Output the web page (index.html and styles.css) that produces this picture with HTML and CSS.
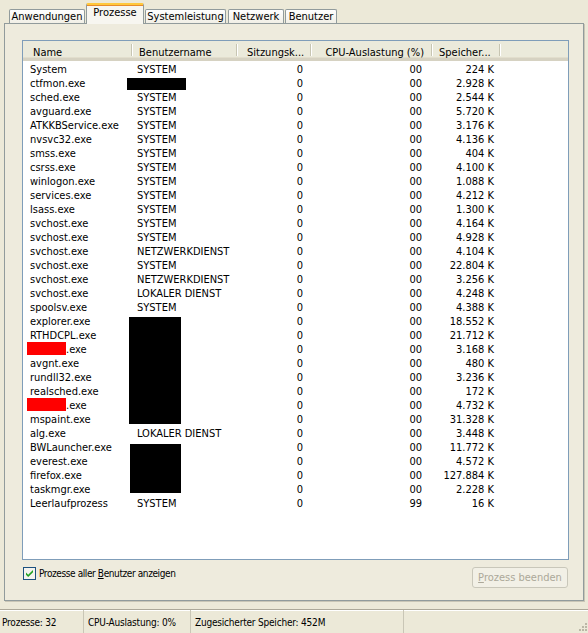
FILE: index.html
```html
<!DOCTYPE html>
<html lang="de">
<head>
<meta charset="utf-8">
<title>Task-Manager</title>
<link rel="stylesheet" href="styles.css">
</head>
<body>
<div class="window">
  <div class="content">
    <div class="tabs">
      <div class="tab tab-anw">Anwendungen</div>
      <div class="tab tab-active tab-proz">Prozesse</div>
      <div class="tab tab-sys">Systemleistung</div>
      <div class="tab tab-net">Netzwerk</div>
      <div class="tab tab-ben">Benutzer</div>
    </div>
    <div class="panel">
      <div class="list">
        <div class="header">
          <div class="hcell h-name">Name</div>
          <div class="hcell h-user">Benutzername</div>
          <div class="hcell h-sess">Sitzungsk...</div>
          <div class="hcell h-cpu">CPU-Auslastung (%)</div>
          <div class="hcell h-mem">Speicher...</div>
          <div class="hfill"></div>
        </div>
        <table class="rows">
          <colgroup><col class="c-name"><col class="c-user"><col class="c-sess"><col class="c-cpu"><col class="c-mem"></colgroup>
          <tbody>
            <tr><td class="n">System</td><td class="u">SYSTEM</td><td class="s">0</td><td class="p">00</td><td class="m">224 K</td></tr>
            <tr><td class="n">ctfmon.exe</td><td class="u"></td><td class="s">0</td><td class="p">00</td><td class="m">2.928 K</td></tr>
            <tr><td class="n">sched.exe</td><td class="u">SYSTEM</td><td class="s">0</td><td class="p">00</td><td class="m">2.544 K</td></tr>
            <tr><td class="n">avguard.exe</td><td class="u">SYSTEM</td><td class="s">0</td><td class="p">00</td><td class="m">5.720 K</td></tr>
            <tr><td class="n">ATKKBService.exe</td><td class="u">SYSTEM</td><td class="s">0</td><td class="p">00</td><td class="m">3.176 K</td></tr>
            <tr><td class="n">nvsvc32.exe</td><td class="u">SYSTEM</td><td class="s">0</td><td class="p">00</td><td class="m">4.136 K</td></tr>
            <tr><td class="n">smss.exe</td><td class="u">SYSTEM</td><td class="s">0</td><td class="p">00</td><td class="m">404 K</td></tr>
            <tr><td class="n">csrss.exe</td><td class="u">SYSTEM</td><td class="s">0</td><td class="p">00</td><td class="m">4.100 K</td></tr>
            <tr><td class="n">winlogon.exe</td><td class="u">SYSTEM</td><td class="s">0</td><td class="p">00</td><td class="m">1.088 K</td></tr>
            <tr><td class="n">services.exe</td><td class="u">SYSTEM</td><td class="s">0</td><td class="p">00</td><td class="m">4.212 K</td></tr>
            <tr><td class="n">lsass.exe</td><td class="u">SYSTEM</td><td class="s">0</td><td class="p">00</td><td class="m">1.300 K</td></tr>
            <tr><td class="n">svchost.exe</td><td class="u">SYSTEM</td><td class="s">0</td><td class="p">00</td><td class="m">4.164 K</td></tr>
            <tr><td class="n">svchost.exe</td><td class="u">SYSTEM</td><td class="s">0</td><td class="p">00</td><td class="m">4.928 K</td></tr>
            <tr><td class="n">svchost.exe</td><td class="u">NETZWERKDIENST</td><td class="s">0</td><td class="p">00</td><td class="m">4.104 K</td></tr>
            <tr><td class="n">svchost.exe</td><td class="u">SYSTEM</td><td class="s">0</td><td class="p">00</td><td class="m">22.804 K</td></tr>
            <tr><td class="n">svchost.exe</td><td class="u">NETZWERKDIENST</td><td class="s">0</td><td class="p">00</td><td class="m">3.256 K</td></tr>
            <tr><td class="n">svchost.exe</td><td class="u">LOKALER DIENST</td><td class="s">0</td><td class="p">00</td><td class="m">4.248 K</td></tr>
            <tr><td class="n">spoolsv.exe</td><td class="u">SYSTEM</td><td class="s">0</td><td class="p">00</td><td class="m">4.388 K</td></tr>
            <tr><td class="n">explorer.exe</td><td class="u"></td><td class="s">0</td><td class="p">00</td><td class="m">18.552 K</td></tr>
            <tr><td class="n">RTHDCPL.exe</td><td class="u"></td><td class="s">0</td><td class="p">00</td><td class="m">21.712 K</td></tr>
            <tr><td class="n"><span class="red"></span>.exe</td><td class="u"></td><td class="s">0</td><td class="p">00</td><td class="m">3.168 K</td></tr>
            <tr><td class="n">avgnt.exe</td><td class="u"></td><td class="s">0</td><td class="p">00</td><td class="m">480 K</td></tr>
            <tr><td class="n">rundll32.exe</td><td class="u"></td><td class="s">0</td><td class="p">00</td><td class="m">3.236 K</td></tr>
            <tr><td class="n">realsched.exe</td><td class="u"></td><td class="s">0</td><td class="p">00</td><td class="m">172 K</td></tr>
            <tr><td class="n"><span class="red"></span>.exe</td><td class="u"></td><td class="s">0</td><td class="p">00</td><td class="m">4.732 K</td></tr>
            <tr><td class="n">mspaint.exe</td><td class="u"></td><td class="s">0</td><td class="p">00</td><td class="m">31.328 K</td></tr>
            <tr><td class="n">alg.exe</td><td class="u">LOKALER DIENST</td><td class="s">0</td><td class="p">00</td><td class="m">3.448 K</td></tr>
            <tr><td class="n">BWLauncher.exe</td><td class="u"></td><td class="s">0</td><td class="p">00</td><td class="m">11.772 K</td></tr>
            <tr><td class="n">everest.exe</td><td class="u"></td><td class="s">0</td><td class="p">00</td><td class="m">4.572 K</td></tr>
            <tr><td class="n">firefox.exe</td><td class="u"></td><td class="s">0</td><td class="p">00</td><td class="m">127.884 K</td></tr>
            <tr><td class="n">taskmgr.exe</td><td class="u"></td><td class="s">0</td><td class="p">00</td><td class="m">2.228 K</td></tr>
            <tr><td class="n">Leerlaufprozess</td><td class="u">SYSTEM</td><td class="s">0</td><td class="p">99</td><td class="m">16 K</td></tr>
          </tbody>
        </table>
        <div class="blackout b1"></div>
        <div class="blackout b2"></div>
        <div class="blackout b3"></div>
      </div>
      <div class="bottom-row">
        <label class="check">
          <svg class="checkbox" width="13" height="13" viewBox="0 0 13 13">
            <rect x="0.5" y="0.5" width="12" height="12" fill="#F4F3EE" stroke="#1C5180"/>
            <path d="M3 5.5 L5.2 7.8 L10 3 L10 5.2 L5.2 10 L3 7.7 Z" fill="#21A121"/>
          </svg>
          <span>Prozesse aller <u>B</u>enutzer anzeigen</span>
        </label>
        <div class="button"><u>P</u>rozess beenden</div>
      </div>
    </div>
  </div>
  <div class="statusbar">
    <div class="sb sb1">Prozesse: 32</div>
    <div class="sb sb2">CPU-Auslastung: 0%</div>
    <div class="sb sb3">Zugesicherter Speicher: 452M</div>
    <div class="sb sb4">
      <svg class="grip" width="12" height="12" viewBox="0 0 12 12">
        <g fill="#BAB7A6">
          <rect x="9" y="1" width="2" height="2"/>
          <rect x="6" y="4" width="2" height="2"/><rect x="9" y="4" width="2" height="2"/>
          <rect x="3" y="7" width="2" height="2"/><rect x="6" y="7" width="2" height="2"/><rect x="9" y="7" width="2" height="2"/>
        </g>
      </svg>
    </div>
  </div>
</div>
</body>
</html>
```

FILE: styles.css
```css
html, body {
  margin: 0;
  padding: 0;
}
body {
  background: #ECE9D8;
  font-family: "DejaVu Sans Condensed", "DejaVu Sans", sans-serif;
  font-stretch: condensed;
  font-size: 11px;
  color: #000;
}
.window {
  width: 588px;
  height: 633px;
  display: flex;
  flex-direction: column;
  overflow: hidden;
}
.content {
  padding: 3px 4px 0 4px;
}
.tabs {
  display: flex;
  align-items: flex-end;
  height: 21px;
  padding-left: 5px;
  margin-bottom: -1px;
  position: relative;
  z-index: 1;
}
.tab {
  box-sizing: border-box;
  height: 14px;
  margin-bottom: 1px;
  border: 1px solid #919B9C;
  border-bottom: none;
  border-radius: 2px 2px 0 0;
  background: linear-gradient(#FEFEFE, #F1EFE6);
  text-align: center;
  line-height: 13px;
  white-space: nowrap;
}
.tab-anw { width: 76px; }
.tab-proz { width: 58px; margin-left: 1px; }
.tab-sys { width: 81px; margin-left: 1px; }
.tab-net { width: 56px; margin-left: 2px; }
.tab-ben { width: 52px; margin-left: 1px; }
.tab-active {
  height: 21px;
  margin-bottom: 0;
  border-top: 2px solid #FFC83C;
  box-shadow: inset 0 1px 0 #E68B2C;
  background: #F7F6F0;
  line-height: 15px;
}
.panel {
  box-sizing: border-box;
  height: 578px;
  border: 1px solid #919B9C;
  box-shadow: 1px 1px 0 #C9C6B6;
  padding: 16px 14px 0 17px;
  background: #EEEBDD;
}
.list {
  position: relative;
  box-sizing: border-box;
  height: 520px;
  border: 1px solid #7F9DB9;
  background: #FFFFFF;
  overflow: hidden;
}
.header {
  display: flex;
  box-sizing: border-box;
  height: 20px;
  background: #EBEADB;
  border-bottom: 3px solid #D6D2C2;
  box-shadow: inset 0 -1px 0 #E2DECD;
}
.hcell {
  position: relative;
  box-sizing: border-box;
  height: 17px;
  line-height: 24px;
  white-space: nowrap;
}
.hcell::after {
  content: "";
  position: absolute;
  right: 0;
  top: 3px;
  bottom: 2px;
  width: 1px;
  background: #C7C5B2;
  box-shadow: 1px 0 0 #FFFFFF;
}
.h-name { width: 109px; padding-left: 10px; }
.h-user { width: 105px; padding-left: 7px; }
.h-sess { width: 74px; padding-left: 10px; }
.h-cpu { width: 121px; padding-right: 8px; text-align: right; }
.h-mem { width: 68px; padding-left: 7px; }
.hfill { flex: 1; }
.rows {
  border-collapse: collapse;
  table-layout: fixed;
  width: 477px;
}
.c-name { width: 109px; }
.c-user { width: 105px; }
.c-sess { width: 74px; }
.c-cpu { width: 121px; }
.c-mem { width: 68px; }
.rows td {
  height: 10px;
  line-height: 10px;
  padding: 4px 0 0 0;
  white-space: nowrap;
}
.rows td.n { padding-left: 7px; }
.rows td.u { padding-left: 5px; }
.rows td.s { text-align: right; padding-right: 8px; }
.rows td.p { text-align: right; padding-right: 10px; }
.rows td.m { text-align: right; padding-right: 6px; }
.red {
  display: inline-block;
  width: 39px;
  height: 13px;
  margin: -3px 0 0 -3px;
  background: #FF0000;
  vertical-align: top;
}
.blackout {
  position: absolute;
  background: #000;
}
.b1 { left: 104px; top: 37px; width: 59px; height: 12px; }
.b2 { left: 106px; top: 276px; width: 52px; height: 107px; }
.b3 { left: 107px; top: 403px; width: 51px; height: 49px; }
.bottom-row {
  display: flex;
  justify-content: space-between;
  align-items: flex-start;
  margin-top: 7px;
}
.check {
  display: flex;
  align-items: center;
  gap: 3px;
  margin-left: 1px;
  height: 13px;
  font-size: 10px;
  letter-spacing: -0.4px;
}
.checkbox { display: block; }
.button {
  box-sizing: border-box;
  width: 96px;
  height: 21px;
  margin-right: 1px;
  border: 1px solid #C9C7BA;
  border-radius: 3px;
  color: #ACA899;
  text-align: center;
  line-height: 19px;
  background: #F2F0E6;
}
.statusbar {
  display: flex;
  margin-top: 8px;
  border-top: 1px solid #ACA899;
  box-shadow: inset 0 1px 0 #FFFFFF;
  height: 24px;
  font-size: 10px;
  letter-spacing: -0.2px;
}
.sb {
  box-sizing: border-box;
  height: 100%;
  line-height: 25px;
  padding-left: 4px;
  border-right: 1px solid #C9C6B6;
  white-space: nowrap;
}
.sb1 { width: 84px; padding-left: 2px; }
.sb2 { width: 107px; }
.sb3 { width: 213px; }
.sb4 {
  flex: 1;
  border-right: none;
  display: flex;
  justify-content: flex-end;
  align-items: flex-end;
}
.grip { display: block; }
```
